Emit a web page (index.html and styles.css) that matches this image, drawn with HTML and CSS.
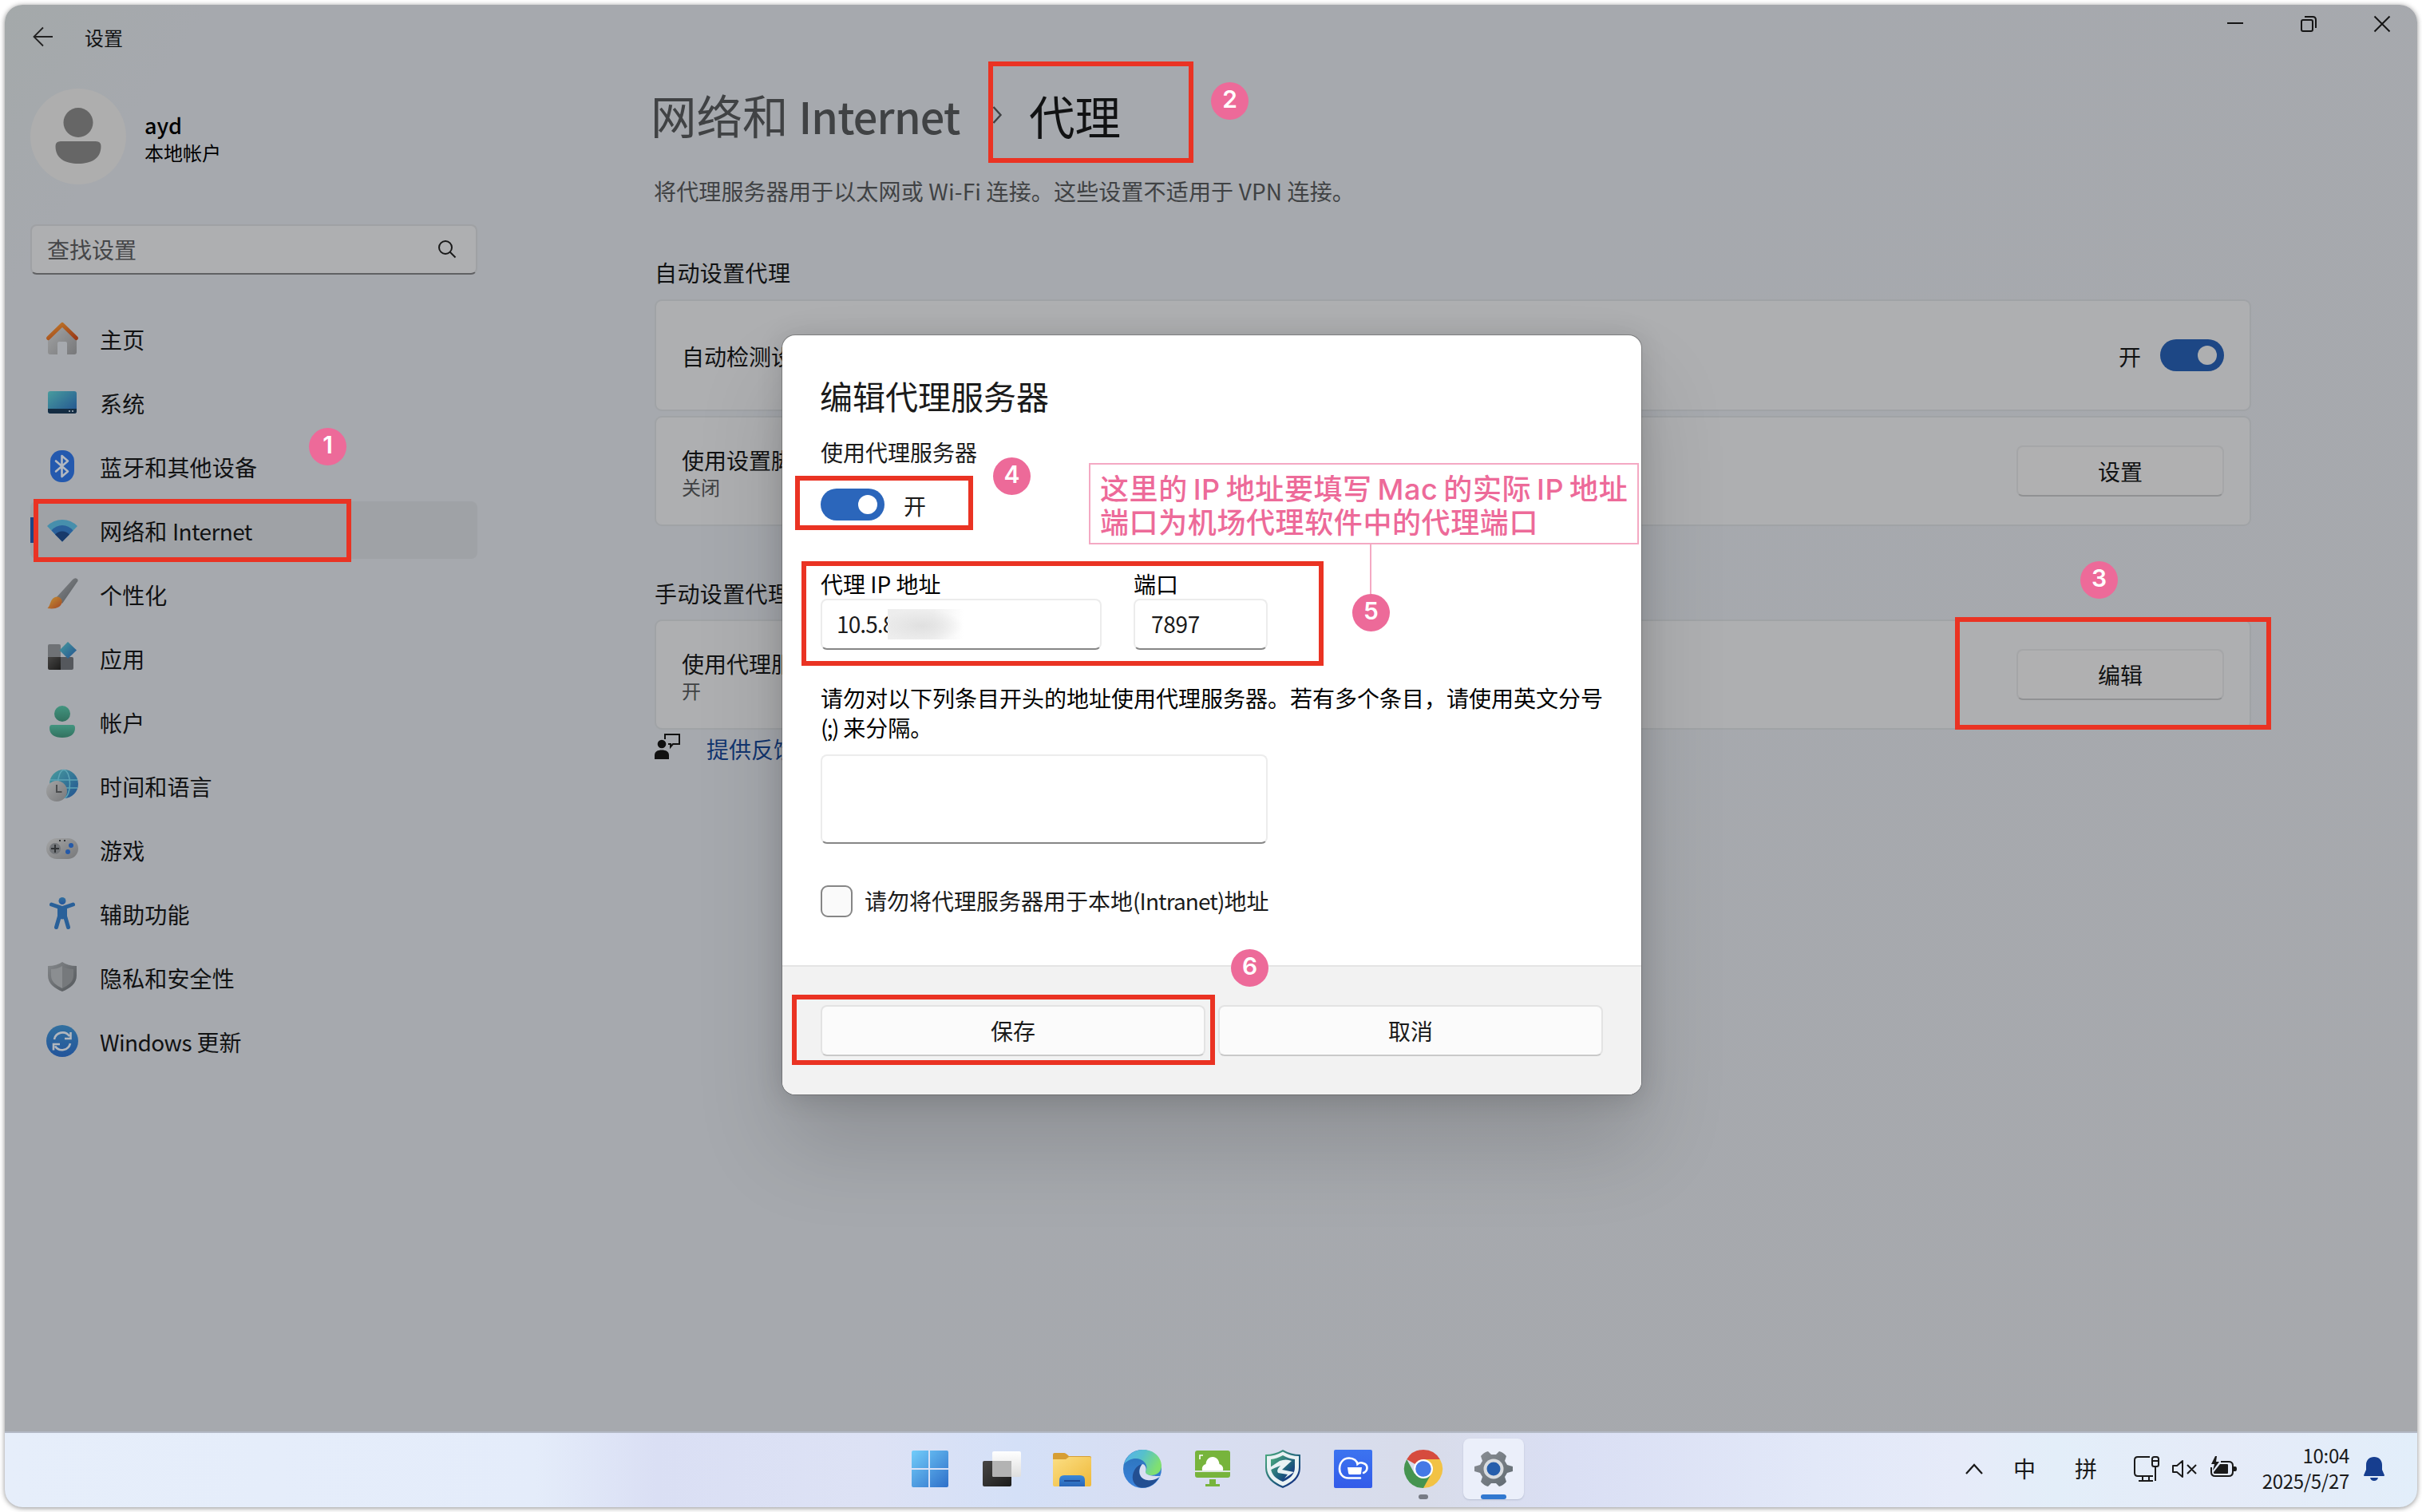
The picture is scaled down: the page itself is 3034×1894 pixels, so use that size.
FILE: index.html
```html
<!DOCTYPE html>
<html lang="zh-CN">
<head>
<meta charset="utf-8">
<title>设置</title>
<link rel="stylesheet" href="styles.css">
</head>
<body>
<svg class="defs" width="0" height="0" aria-hidden="true">
  <defs>
    <linearGradient id="roof" x1="0" y1="0" x2="1" y2="1"><stop offset="0" stop-color="#c07a2a"/><stop offset="1" stop-color="#9a3a18"/></linearGradient>
    <linearGradient id="grey" x1="0" y1="0" x2="1" y2="1"><stop offset="0" stop-color="#a4a5a6"/><stop offset="1" stop-color="#77787a"/></linearGradient>
    <linearGradient id="steel" x1="0" y1="0" x2="1" y2="1"><stop offset="0" stop-color="#85888b"/><stop offset="1" stop-color="#53575b"/></linearGradient>
    <linearGradient id="teal" x1="0" y1="0" x2="1" y2="1"><stop offset="0" stop-color="#489c9e"/><stop offset="1" stop-color="#225290"/></linearGradient>
    <linearGradient id="blue" x1="0" y1="0" x2="0" y2="1"><stop offset="0" stop-color="#32709f"/><stop offset="1" stop-color="#23559b"/></linearGradient>
    <linearGradient id="green" x1="0" y1="0" x2="0" y2="1"><stop offset="0" stop-color="#439580"/><stop offset="1" stop-color="#32715f"/></linearGradient>
    <linearGradient id="amber" x1="0" y1="0" x2="1" y2="1"><stop offset="0" stop-color="#c49335"/><stop offset="1" stop-color="#a34623"/></linearGradient>
    <linearGradient id="win" x1="0" y1="0" x2="1" y2="1"><stop offset="0" stop-color="#72cdfa"/><stop offset="1" stop-color="#2e6fc9"/></linearGradient>
    <linearGradient id="dark" x1="0" y1="0" x2="1" y2="1"><stop offset="0" stop-color="#474645"/><stop offset="1" stop-color="#1c1c1b"/></linearGradient>
    <linearGradient id="paper" x1="0" y1="0" x2="0" y2="1"><stop offset="0" stop-color="#ffffff"/><stop offset="1" stop-color="#dedede"/></linearGradient>
    <linearGradient id="folder" x1="0" y1="0" x2="1" y2="1"><stop offset="0" stop-color="#fbde83"/><stop offset="1" stop-color="#efb93a"/></linearGradient>
    <linearGradient id="pocket" x1="0" y1="0" x2="0" y2="1"><stop offset="0" stop-color="#3a88d8"/><stop offset="1" stop-color="#2a66b8"/></linearGradient>
    <linearGradient id="edgeTop" x1="0" y1="0" x2="1" y2="0.4"><stop offset="0" stop-color="#58b1ee"/><stop offset=".5" stop-color="#56c0cc"/><stop offset="1" stop-color="#80e070"/></linearGradient>
    <linearGradient id="edgeLow" x1="0" y1="0" x2="0" y2="1"><stop offset="0" stop-color="#2b73b8"/><stop offset="1" stop-color="#3a82dc"/></linearGradient>
    <linearGradient id="shield" x1="0" y1="0" x2="1" y2="1"><stop offset="0" stop-color="#4fb07f"/><stop offset=".6" stop-color="#1d5c7c"/><stop offset="1" stop-color="#141c86"/></linearGradient>
    <linearGradient id="cloud" x1="0" y1="0" x2="0" y2="1"><stop offset="0" stop-color="#3c74f0"/><stop offset="1" stop-color="#335be9"/></linearGradient>
    <linearGradient id="gear" x1="0" y1="0" x2="1" y2="1"><stop offset="0" stop-color="#8c9096"/><stop offset="1" stop-color="#5f6970"/></linearGradient>
  </defs>
</svg>

<div class="desktop">
  <header class="titlebar">
    <svg class="back" viewBox="0 0 26 26"><path d="M25 13H2M13 1.500 1.500 13 13 24.500"/></svg>
    <span class="app-name">设置</span>
    <div class="controls">
      <svg viewBox="0 0 20 20"><path d="M0 9H20"/></svg>
      <svg viewBox="0 0 20 20"><rect x="1" y="5" width="14" height="14" rx="2"/><path d="M5 1H15Q19 1 19 5V15"/></svg>
      <svg viewBox="0 0 20 20"><path d="M.5.5 19.500 19.500M19.500.5.5 19.500"/></svg>
    </div>
  </header>

  <div class="window">
    <aside class="sidebar">
      <div class="user">
        <svg class="avatar" viewBox="0 0 120 120"><circle cx="60" cy="60" r="60" fill="#aeaeae"/><circle cx="60" cy="42.500" r="18.500" fill="#666"/><path d="M38 66H82Q88.500 66 88.500 72C88.500 88 76 94 60 94S31.500 88 31.500 72Q31.500 66 38 66Z" fill="#666"/></svg>
        <div class="who"><strong>ayd</strong><span>本地帐户</span></div>
      </div>
      <div class="search"><span>查找设置</span>
        <svg viewBox="0 0 22 22"><circle cx="9" cy="9" r="8"/><path d="M14.500 14.500 21.500 21.500"/></svg>
      </div>
      <nav class="nav">
        <a class="item"><svg viewBox="0 0 40 40"><path d="M20 3 38 20V37Q38 40 35 40H26V26Q26 24 24 24H16Q14 24 14 26V40H5Q2 40 2 37V20Z" fill="url(#grey)"/><path d="M2.500 19.500 20 2.500 37.500 19.500" fill="none" stroke="url(#roof)" stroke-width="5" stroke-linecap="round" stroke-linejoin="round"/></svg><span>主页</span></a>
        <a class="item"><svg viewBox="0 0 40 40"><rect x="2" y="6" width="36" height="28" rx="3" fill="url(#teal)"/><path d="M2 28H38V31Q38 34 35 34H5Q2 34 2 31Z" fill="#142c42"/><path d="M28 30h2v2h-2zM32 30h2v2h-2z" fill="#8796a3"/></svg><span>系统</span></a>
        <a class="item"><svg viewBox="0 0 40 40"><rect x="5" y="0" width="30" height="40" rx="14" fill="#2459ae"/><path d="M12 13.500 27 26.500 19.500 33V7L27 13.500 12 26.500" fill="none" stroke="#b3b8c0" stroke-width="2.600" stroke-linejoin="round" stroke-linecap="round"/></svg><span>蓝牙和其他设备</span></a>
        <a class="item active"><svg viewBox="0 0 40 40"><path d="M20 34.500 1 15Q9 7 20 7T39 15Z" fill="#478fac"/><path d="M20 34.500 6.500 20.500Q12 14 20 14T33.500 20.500Z" fill="#2a609b"/><path d="M20 34.500 11 25.500Q15 21.500 20 21.500T29 25.500Z" fill="#183a6b"/></svg><span>网络和 <em>Internet</em></span></a>
        <a class="item"><svg viewBox="0 0 40 40"><path d="M12 25 33 2Q36-1 38.500 1T38 6L20 32Z" fill="url(#steel)"/><path d="M11 24C15 22 21 26 19.500 31C18 37 11 39.500 1.500 38C6 34 4 27 11 24Z" fill="url(#amber)"/></svg><span>个性化</span></a>
        <a class="item"><svg viewBox="0 0 40 40"><rect x="2" y="3" width="16" height="17" rx="2" fill="#6f7276"/><path d="M2 19H18V35H4Q2 35 2 33Z" fill="url(#dark)"/><path d="M18 19H32Q34 19 34 21V33Q34 35 32 35H18Z" fill="#55585d"/><path d="M27 0 38 10.500 27 21 16.500 10.500Z" fill="url(#teal)"/></svg><span>应用</span></a>
        <a class="item"><svg viewBox="0 0 40 40"><circle cx="20" cy="10" r="10" fill="url(#green)"/><path d="M7 24H33Q36 24 36 28C36 36 30 40 20 40S4 36 4 28Q4 24 7 24Z" fill="url(#green)"/></svg><span>帐户</span></a>
        <a class="item"><svg viewBox="0 0 40 40"><circle cx="22" cy="18" r="18" fill="url(#teal)"/><g fill="none" stroke="#5ea4b5" stroke-width="1.500"><ellipse cx="22" cy="18" rx="7.500" ry="17.500"/><path d="M5 13H39M5 23H39"/></g><circle cx="13" cy="27" r="13" fill="url(#grey)"/><path d="M13 19V28H19.500" fill="none" stroke="#4a4c4e" stroke-width="2"/></svg><span>时间和语言</span></a>
        <a class="item"><svg viewBox="0 0 40 40"><rect y="6" width="40" height="26" rx="13" fill="url(#grey)"/><circle cx="11" cy="19" r="7" fill="#73767a"/><path d="M11 14V24M6 19H16" stroke="#303336" stroke-width="2"/><circle cx="31" cy="15" r="3" fill="#2459a8"/><circle cx="27" cy="23" r="3" fill="#2459a8"/><path d="M16 8h2v2h-2zM22 8h2v2h-2z" fill="#303336"/></svg><span>游戏</span></a>
        <a class="item"><svg viewBox="0 0 40 40"><circle cx="20" cy="4.500" r="4.500" fill="url(#blue)"/><path d="M6.500 9 20 13.500 33.500 9M20 14V25M17 22 12.500 37.500M23 22 27.500 37.500" fill="none" stroke="#296099" stroke-width="5" stroke-linecap="round"/><path d="M14 13H26V26H14Z" fill="#296099"/></svg><span>辅助功能</span></a>
        <a class="item"><svg viewBox="0 0 40 40"><path d="M20 1Q27 6 38 6V18C38 28 30 34 20 38C10 34 2 28 2 18V6Q13 6 20 1Z" fill="url(#steel)"/><path d="M20 6Q26 10 34 10V18C34 26 28 30 20 34Z" fill="#76797c"/><path d="M20 6Q14 10 6 10V18C6 26 12 30 20 34Z" fill="#8b8e91"/></svg><span>隐私和安全性</span></a>
        <a class="item"><svg viewBox="0 0 40 40"><circle cx="20" cy="20" r="20" fill="url(#blue)"/><path d="M10 18A10.500 10.500 0 0 1 29 14M30.500 9V17H23M30 23A10.500 10.500 0 0 1 11 26.500M9 31.500V24H17" fill="none" stroke="#b2b7bd" stroke-width="2.600"/></svg><span><em>Windows</em> 更新</span></a>
      </nav>
    </aside>

    <main class="content">
      <h1 class="crumbs"><span class="parent">网络和 <b>Internet</b></span><svg viewBox="0 0 12 22"><path d="M1.500 1 10.500 11 1.500 21"/></svg><span>代理</span></h1>
      <p class="intro">将代理服务器用于以太网或 Wi-Fi 连接。这些设置不适用于 VPN 连接。</p>
      <h2 class="section">自动设置代理</h2>
      <section class="card tall"><div class="desc"><span>自动检测设置</span></div><span class="state">开</span><i class="toggle dim"></i></section>
      <section class="card"><div class="desc"><span>使用设置脚本</span><small>关闭</small></div><button class="btn dim">设置</button></section>
      <h2 class="section second">手动设置代理</h2>
      <section class="card"><div class="desc"><span>使用代理服务器</span><small>开</small></div><button class="btn dim">编辑</button></section>
      <a class="feedback"><svg viewBox="0 0 34 34"><circle cx="9" cy="12" r="5.300" fill="#111"/><path d="M0 31V26C0 21.500 4 19.500 9 19.500S18 21.500 18 26V31Z" fill="#111"/><path d="M13 6V0H31V12H23L20 15.500V12H17" fill="none" stroke="#111" stroke-width="2"/></svg><span>提供反馈</span></a>
    </main>
  </div>

  <footer class="taskbar">
    <div class="apps">
      <span class="app start"><svg viewBox="0 0 48 48"><path d="M3 1H22V23H1V3Q1 1 3 1ZM24 1H45Q47 1 47 3V23H24ZM1 25H22V47H3Q1 47 1 45ZM24 25H47V45Q47 47 45 47H24Z" fill="url(#win)"/></svg></span>
      <span class="app"><svg viewBox="0 0 48 48"><rect x="0" y="14" width="36" height="32" rx="2" fill="url(#dark)"/><rect x="12" y="2" width="36" height="32" rx="2" fill="url(#paper)"/><path d="M12 14H36V34H14Q12 34 12 32Z" fill="#b3b3b3"/></svg></span>
      <span class="app"><svg viewBox="0 0 48 48"><path d="M0 6Q0 4 2 4H14Q16 4 20 8H46Q48 8 48 10V20H0Z" fill="#d79e33"/><path d="M0 12H16L20 9H46Q48 9 48 11V44Q48 46 46 46H2Q0 46 0 44Z" fill="url(#folder)"/><path d="M8 46V38Q8 32 14 32H34Q40 32 40 38V46Z" fill="url(#pocket)"/><path d="M14 39H34" stroke="#1d4a94" stroke-width="2"/></svg></span>
      <span class="app"><svg viewBox="0 0 48 48"><circle cx="24" cy="24" r="24" fill="url(#edgeLow)"/><path d="M1 18C5 6 14 0 25 0C39 0 48 10 48 20C48 28 42 32 35 32C29 32 27 29 28 27C30 24 30 20 27 16C21 9 9 9 1 18Z" fill="url(#edgeTop)"/><path d="M44 36C38 46 28 49 20 47C11 43 10 33 14 26C16 22 19 19 24 18C18 23 18 36 30 38C36 39 40 37 44 35Z" fill="#234f92"/><path d="M24 18C19 23 18 36 30 38C36 39 41 37 44 35L47 33C40 33 27 33 28 27C30 23 27 18 24 18Z" fill="#d9dff1"/></svg></span>
      <span class="app"><svg viewBox="0 0 48 48"><rect x="2" y="1" width="44" height="34" rx="3" fill="#77b43c"/><path d="M12 28C9 23 12 19 15.500 18C16 12 20 9 24 9S32 12 32.500 18C36 19 39 23 36 28Z" fill="#fff"/><path d="M2 26H46V28H2Z" fill="#dbe6dd"/><path d="M8 12V7H12" fill="none" stroke="#fff" stroke-width="1.600"/><path d="M20 37H28V43H33V46H15V43H20Z" fill="#77b43c"/></svg></span>
      <span class="app"><svg viewBox="0 0 48 48"><path d="M24 0Q34 6 46 6V22C46 36 36 43 24 48C12 43 2 36 2 22V6Q14 6 24 0Z" fill="url(#shield)"/><path d="M24 2.500Q34 8 44 8V22C44 34 35 41 24 45.500C13 41 4 34 4 22V8Q14 8 24 2.500Z" fill="#e9f2f4"/><path d="M24 7Q32 11.500 39 12V22C39 31 33 36 24 40C15 36 9 31 9 22V12Q16 11.500 24 7Z" fill="url(#shield)"/><path d="M5 24 20 14Q28 11 35 14L23 25 38 28 26 36 30 31 18 29Q15 26 21 20Q15 22 5 27Z" fill="#e9f2f4"/></svg></span>
      <span class="app"><svg viewBox="0 0 48 48"><rect width="48" height="48" rx="2" fill="url(#cloud)"/><path d="M33 35.500H18C11 35.500 7 30 7 24C7 16 12 10.500 19 10.500C25 10.500 29 14 29.500 18Q33 15 37 17C43 19 43 26 37 29" fill="none" stroke="#fff" stroke-width="2.600" stroke-linecap="round"/><path d="M17 22H35L34 30Q34 31 32 31H20Q18 31 18 29Z" fill="#fff"/></svg></span>
      <span class="app"><svg viewBox="0 0 48 48"><path d="M24 24 3.200 12A24 24 0 0 1 44.800 12Z" fill="#d64b3e"/><path d="M24 24 24 12H44.800A24 24 0 0 1 24 48Z" fill="#f2c244"/><path d="M24 24 34 30 24 48A24 24 0 0 1 3.200 12L13 30Z" fill="#459450"/><circle cx="24" cy="24" r="12" fill="#fff"/><circle cx="24" cy="24" r="9.800" fill="#4579e6"/></svg><i class="dot"></i></span>
      <span class="app current"><svg viewBox="0 0 48 48"><path d="M17 2 21 6H27L31 2Q36 3 40 8L38 14 41 19 48 21V27L41 29 38 34 40 40Q36 45 31 46L27 42H21L17 46Q12 45 8 40L10 34 7 29 0 27V21L7 19 10 14 8 8Q12 3 17 2Z" fill="url(#gear)"/><circle cx="24" cy="24" r="12.500" fill="#d9dce0"/><circle cx="24" cy="24" r="8.500" fill="#265eac"/></svg><i class="bar"></i></span>
    </div>
    <div class="tray">
      <svg class="t-chev" viewBox="0 0 22 14"><path d="M1 13 11 2 21 13" fill="none" stroke="#1a1a1a" stroke-width="2.200"/></svg>
      <span class="t-zh">中</span><span class="t-pin">拼</span>
      <svg class="t-net" viewBox="0 0 32 34"><path d="M20 2H5Q1 2 1 6V22Q1 26 5 26H24M11 26V31M19 26V31M6 32H24M27 15V32" fill="none" stroke="#1a1a1a" stroke-width="2"/><rect x="23" y="2" width="8" height="12" rx="2.500" fill="none" stroke="#1a1a1a" stroke-width="2"/><path d="M23 7H31" stroke="#1a1a1a" stroke-width="2"/></svg>
      <svg class="t-vol" viewBox="0 0 32 24"><path d="M1 8H6L13 2V22L6 16H1ZM19 7 30 18M30 7 19 18" fill="none" stroke="#1a1a1a" stroke-width="2" stroke-linejoin="round"/></svg>
      <svg class="t-bat" viewBox="0 0 34 28"><path d="M13 7H23Q28 7 28 12V20Q28 25 23 25H6Q1 25 1 20V14" fill="none" stroke="#1a1a1a" stroke-width="2"/><path d="M29 13H31Q33 13 33 16T31 19H29Z" fill="#1a1a1a"/><path d="M12 10H21Q22 10 22 11V21Q22 22 21 22H5Q4 22 4 21V20Z" fill="#1a1a1a"/><path d="M6 0 1 10H5L3 18 11 7H7L8 0Z" fill="#1a1a1a"/></svg>
      <div class="clock"><span>10:04</span><span>2025/5/27</span></div>
      <svg class="t-bell" viewBox="0 0 26 30"><path d="M13 0C19 0 23 4 23 10V16L26 23Q26 24 25 24H1Q0 24 0 23L3 16V10C3 4 7 0 13 0ZM8 26H18Q17 30 13 30T8 26Z" fill="#163e8f"/></svg>
    </div>
  </footer>
</div>

<div class="dialog" role="dialog">
  <div class="dialog-body">
    <h3>编辑代理服务器</h3>
    <div class="label use">使用代理服务器</div>
    <div class="switch"><i class="toggle"></i><span>开</span></div>
    <div class="fields">
      <label class="ip">代理 IP 地址<span class="input">10.5.8<i class="redact"></i></span></label>
      <label class="port">端口<span class="input">7897</span></label>
    </div>
    <p class="note">请勿对以下列条目开头的地址使用代理服务器。若有多个条目，请使用英文分号 <em>(;)</em> 来分隔。</p>
    <div class="input area"></div>
    <div class="check"><i></i><span>请勿将代理服务器用于本地<em>(Intranet)</em>地址</span></div>
  </div>
  <div class="dialog-foot"><button class="btn">保存</button><button class="btn">取消</button></div>
</div>

<i class="mark m1"></i><i class="mark m2"></i><i class="mark m3"></i><i class="mark m4"></i><i class="mark m5"></i><i class="mark m6"></i>
<b class="step s1">1</b><b class="step s2">2</b><b class="step s3">3</b><b class="step s4">4</b><b class="step s5">5</b><b class="step s6">6</b>
<i class="lead"></i>
<div class="callout">这里的 IP 地址要填写 Mac 的实际 IP 地址<br>端口为机场代理软件中的代理端口</div>
</body>
</html>
```
FILE: styles.css
```css
* { box-sizing: border-box; }
body {
  margin: 0;
  width: 3034px;
  height: 1894px;
  position: relative;
  overflow: hidden;
  background: #fff;
  color: #111213;
  font: 28px/40px "Noto Sans CJK SC", sans-serif;
}
h1, h2, h3, p { margin: 0; font-weight: 400; }
i, em { font-style: normal; }
em { letter-spacing: -.6px; }
svg { display: block; flex: none; overflow: visible; }
button { font: inherit; color: inherit; padding: 0; }
.defs { position: absolute; }

.desktop {
  margin: 6px;
  width: 3022px;
  height: 1882px;
  border-radius: 22px;
  overflow: hidden;
  display: flex;
  flex-direction: column;
  background: linear-gradient(125deg, #a4a9aa 0, #a6a9ae 6%, #a6a9ae 50%, #a7a9ad 100%);
  box-shadow: 0 1px 6px rgba(0, 0, 0, .45);
}

.titlebar { height: 80px; flex: none; display: flex; align-items: flex-start; padding: 0 34px 0 35px; }
.back { width: 26px; height: 26px; margin-top: 27px; fill: none; stroke: #222; stroke-width: 1.800; }
.app-name { font-size: 24px; margin: 21px 0 0 39px; }
.controls { margin: 14px 0 0 auto; display: flex; gap: 72px; }
.controls svg { width: 20px; height: 20px; fill: none; stroke: #151515; stroke-width: 2; }

.window { flex: 1; display: grid; grid-template-columns: 814px 2000px; }
.sidebar { padding: 25px 0 0 32px; }
.user { display: flex; gap: 23px; height: 120px; }
.avatar { width: 120px; height: 120px; }
.who { display: flex; flex-direction: column; padding-top: 29px; line-height: 34px; font-size: 24px; color: #000; }
.who strong { font-size: 27px; font-weight: 500; }
.search {
  margin-top: 50px; width: 560px; height: 63px; padding: 0 25px 2px 19px;
  display: flex; align-items: center; justify-content: space-between;
  background: #aeafb1; border: 2px solid #9fa1a4; border-bottom-color: #606163; border-radius: 8px; color: #454648;
}
.search svg { width: 22px; height: 22px; fill: none; stroke: #1a1a1a; stroke-width: 2; }
.nav { margin-top: 44px; width: 560px; display: flex; flex-direction: column; gap: 8px; }
.item { height: 72px; padding-left: 20px; display: flex; align-items: center; gap: 27px; border-radius: 8px; letter-spacing: .15px; }
.item svg { width: 40px; height: 40px; }
.item span { padding-top: 2px; }
.active { background: linear-gradient(#1d4585, #1d4585) 0 20px / 6px 32px no-repeat #9fa2a6; }

.content { padding-top: 18px; }
.crumbs { display: flex; align-items: center; height: 80px; font-size: 57.5px; line-height: 80px; }
.crumbs b { font-weight: 500; font-size: 54px; letter-spacing: -.8px; }
.parent { color: #404244; width: 428px; margin-left: -5px; white-space: nowrap; }
.crumbs svg { width: 12px; height: 22px; margin-right: 34px; fill: none; stroke: #404244; stroke-width: 2.400; }
.intro { margin: 35px 0 0 -1px; color: #404244; letter-spacing: .15px; }
.section { font-size: 28px; margin: 62px 0 14px; letter-spacing: .4px; }
.section.second { margin: 64px 0 13px; }
.card {
  height: 138px; padding: 0 32px; display: flex; align-items: center;
  background: #aeafb1; border: 2px solid #a0a3a6; border-radius: 9px;
}
.card.tall { height: 140px; margin-bottom: 6px; }
.desc { flex: 1; display: flex; flex-direction: column; line-height: 38px; padding-top: 2px; }
.desc small { font-size: 24px; line-height: 30px; color: #404244; }
.state { margin-right: 24px; padding-top: 2px; }
.toggle { flex: none; width: 80px; height: 40px; border-radius: 20px; padding: 8px; background: #2b66bb; }
.toggle::after { content: ""; display: block; width: 24px; height: 24px; margin-left: 39px; border-radius: 50%; background: #fff; }
.toggle.dim { background: #1d4785; }
.toggle.dim::after { background: #aeafb0; }
.btn { width: 482px; height: 64px; border: 2px solid #e3e3e3; border-bottom-color: #c9c9c9; border-radius: 8px; background: #fbfbfb; }
.btn.dim { width: 260px; background: #b0b0b1; border-color: #a5a6a8; border-bottom-color: #909193; }
.feedback { margin-top: 2px; display: flex; align-items: center; gap: 31px; color: #12356f; }
.feedback svg { width: 34px; height: 34px; }
.feedback span { padding-top: 2px; }

.taskbar {
  height: 95px; flex: none; display: flex; align-items: center; padding: 0 41px 3px 1123px; border-top: 2px solid #b3b9c5;
  background: linear-gradient(90deg, #e6eefa 0, #e4ecfa 22%, #dadff4 27%, #dde2f5 36%, #d4e0f7 42%, #d8def2 48%, #d8dcea 59%, #dadff4 65%, #e2e8f8 75%, #e6ebf9 81%, #e3eef9 85%, #e5ebf8 92%, #e2eefa 100%);
}
.apps { display: flex; gap: 12px; }
.app { position: relative; width: 76px; height: 76px; display: grid; place-items: center; border-radius: 8px; }
.app svg { width: 48px; height: 48px; }
.start { padding-right: 4px; }
.current { background: #ebeffa; box-shadow: 0 1px 2px #b7bed2; }
.dot, .bar { position: absolute; bottom: 0; left: 32px; width: 12px; height: 6px; border-radius: 3px; background: #777b85; }
.bar { left: 22px; width: 32px; background: #3178d0; }
.tray { margin-left: auto; display: flex; align-items: center; color: #1a1a1a; }
.t-chev { width: 22px; height: 14px; margin-right: 38px; }
.t-zh, .t-pin { width: 28px; margin: -2px 49px 0 0; }
.t-pin { margin-right: 46px; }
.t-net { width: 32px; height: 34px; margin-right: 16px; }
.t-vol { width: 32px; height: 24px; margin-right: 16px; }
.t-bat { width: 34px; height: 28px; margin: 0 0 4px; }
.clock { width: 140px; display: flex; flex-direction: column; align-items: flex-end; font-size: 24px; line-height: 32px; letter-spacing: -.3px; margin: -2px 18px 0 0; }
.t-bell { width: 26px; height: 30px; }

.dialog {
  position: absolute; left: 980px; top: 420px; width: 1076px; height: 951px; border-radius: 16px;
  background: #fff; color: #1a1a1a; display: flex; flex-direction: column;
  box-shadow: 0 0 0 1px rgba(80, 80, 80, .45), 0 64px 110px rgba(0, 0, 0, .15), 0 4px 34px rgba(0, 0, 0, .14);
}
.dialog-body { flex: 1; padding: 46px 46px 0 48px; }
.dialog h3 { font-size: 41px; line-height: 58px; margin-left: -1px; }
.use { margin-top: 22px; }
.switch { margin-top: 26px; height: 40px; display: flex; align-items: center; gap: 24px; }
.switch span { padding-top: 2px; }
.fields { margin-top: 61px; display: flex; gap: 40px; line-height: 37px; color: #000; }
.ip { width: 352px; }
.port { width: 168px; }
.input { display: block; height: 64px; padding: 0 20px; line-height: 58px; border: 2px solid #ececec; border-bottom-color: #868686; border-radius: 8px; background: #fff; color: #1a1a1a; position: relative; letter-spacing: -.3px; }
.ip .input { padding-left: 18px; letter-spacing: -.9px; }
.redact { position: absolute; left: 82px; top: 11px; width: 95px; height: 38px; background: radial-gradient(ellipse at 45% 55%, #e0e0e0 0, rgba(238, 238, 238, 0) 70%), linear-gradient(90deg, #ededed 0, #efefef 60%, #fff 100%); }
.note { margin-top: 42px; line-height: 37px; color: #000; }
.note em { letter-spacing: -1.6px; }
.area { margin-top: 15px; width: 560px; height: 112px; }
.check { margin-top: 51px; display: flex; align-items: center; gap: 15px; }
.check i { width: 40px; height: 40px; border: 2px solid #868686; border-radius: 9px; background: #fafafa; }
.check span { padding-bottom: 2px; }
.check em { letter-spacing: -.9px; }
.dialog-foot { height: 162px; padding: 48px 46px 0 48px; display: flex; align-items: flex-start; gap: 16px; background: #f2f2f2; border-top: 2px solid #e4e4e4; border-radius: 0 0 16px 16px; }

.mark { position: absolute; border: 6px solid #ea3323; }
.m1 { left: 42px; top: 625px; width: 398px; height: 79px; }
.m2 { left: 1238px; top: 77px; width: 257px; height: 127px; }
.m3 { left: 2449px; top: 773px; width: 396px; height: 141px; }
.m4 { left: 996px; top: 596px; width: 223px; height: 68px; }
.m5 { left: 1004px; top: 703px; width: 654px; height: 131px; }
.m6 { left: 992px; top: 1246px; width: 530px; height: 88px; }
.step { position: absolute; width: 47px; height: 47px; border-radius: 50%; background: #ed6a99; color: #fff; text-align: center; font: 600 30px/43px Inter, sans-serif; }
.s1 { left: 387px; top: 536px; }
.s2 { left: 1517px; top: 103px; }
.s3 { left: 2606px; top: 703px; }
.s4 { left: 1244px; top: 573px; }
.s5 { left: 1694px; top: 744px; }
.s6 { left: 1542px; top: 1189px; }
.lead { position: absolute; left: 1716px; top: 682px; width: 2px; height: 62px; background: #f4a9c3; }
.callout {
  position: absolute; left: 1364px; top: 580px; width: 689px; height: 102px; padding: 10px 0 0 12px;
  border: 2px solid #f4a9c3; background: #fff; color: #ed6a99; white-space: nowrap;
  font: 500 36px/42px Inter, "Noto Sans CJK SC", sans-serif; letter-spacing: .6px; word-spacing: -3.300px;
}
```
